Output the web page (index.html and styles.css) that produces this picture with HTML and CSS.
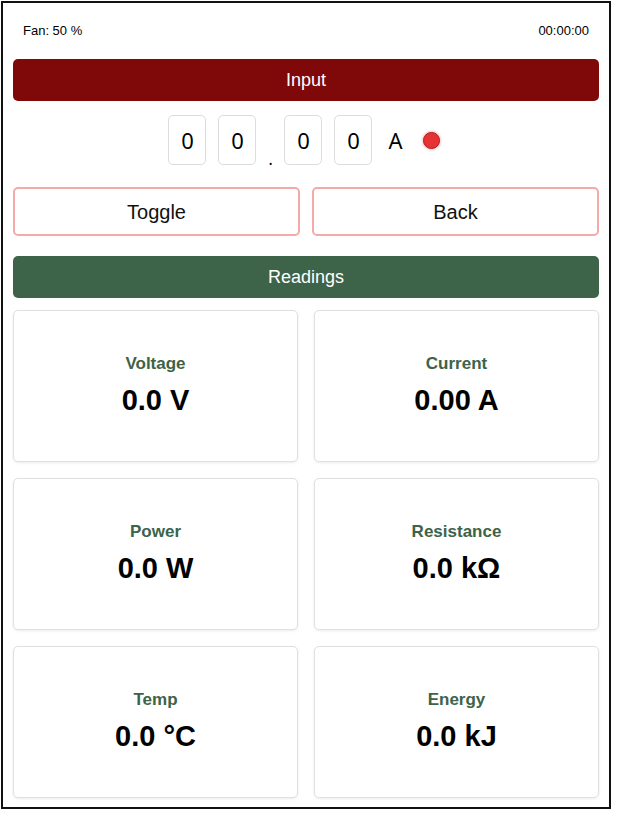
FILE: index.html
```html
<!DOCTYPE html>
<html>
<head>
<meta charset="utf-8">
<link rel="stylesheet" href="styles.css">
</head>
<body>
<div class="frame">
  <div class="status">
    <span>Fan: 50 %</span>
    <span>00:00:00</span>
  </div>
  <div class="bar bar-input">Input</div>
  <div class="digits">
    <div class="digit">0</div>
    <div class="digit">0</div>
    <div class="dot">.</div>
    <div class="digit">0</div>
    <div class="digit">0</div>
    <div class="unit">A</div>
    <div class="led"></div>
  </div>
  <div class="buttons">
    <button class="btn">Toggle</button>
    <button class="btn">Back</button>
  </div>
  <div class="bar bar-readings">Readings</div>
  <div class="cards">
    <div class="card"><div class="label">Voltage</div><div class="value">0.0 V</div></div>
    <div class="card"><div class="label">Current</div><div class="value">0.00 A</div></div>
    <div class="card"><div class="label">Power</div><div class="value">0.0 W</div></div>
    <div class="card"><div class="label">Resistance</div><div class="value">0.0 kΩ</div></div>
    <div class="card"><div class="label">Temp</div><div class="value">0.0 °C</div></div>
    <div class="card"><div class="label">Energy</div><div class="value">0.0 kJ</div></div>
  </div>
</div>
</body>
</html>
```

FILE: styles.css
```css
* { box-sizing: border-box; }
html, body { margin: 0; padding: 0; background: #fff; }
body { font-family: "Liberation Sans", Arial, sans-serif; color: #000; }
.frame {
  margin: 1px;
  width: 610px;
  height: 808px;
  border: 2px solid #111;
  padding: 18px 10px 0 10px;
}
.status {
  display: flex;
  justify-content: space-between;
  font-size: 13px;
  height: 20px;
  line-height: 20px;
  padding: 0 10px 0 10px;
}
.bar {
  height: 42px;
  border-radius: 5px;
  color: #fff;
  font-size: 18px;
  display: flex;
  align-items: center;
  justify-content: center;
}
.bar-input { background: #7f0909; margin-top: 18px; }
.bar-readings { background: #3d6349; margin-top: 20px; }
.digits {
  display: flex;
  justify-content: center;
  align-items: center;
  margin-top: 14px;
  height: 50px;
  font-family: "Noto Sans", "Liberation Sans", sans-serif;
  padding-right: 4px;
}
.digit {
  width: 38px;
  height: 50px;
  border: 1px solid #dcdcdc;
  border-radius: 5px;
  display: flex;
  align-items: center;
  justify-content: center;
  font-size: 22px;
  margin-right: 12px;
}
.dot {
  width: 18px;
  margin-left: -2px;
  align-self: flex-end;
  font-size: 16px;
  line-height: 16px;
  text-align: left;
  padding-left: 2px;
  margin-bottom: -2px;
}
.unit { font-size: 22px; margin-left: 4px; margin-right: 20px; }
.led {
  width: 17px;
  height: 17px;
  border-radius: 50%;
  background: #e53333;
  border: 1px solid #b01e1e;
  box-shadow: 0 0 3px rgba(229, 51, 51, 0.6);
}
.buttons {
  display: grid;
  grid-template-columns: 1fr 1fr;
  gap: 12px;
  margin-top: 22px;
}
.btn {
  height: 49px;
  background: #fff;
  border: 2px solid #f5aaaa;
  border-radius: 5px;
  font-family: "Liberation Sans", Arial, sans-serif;
  font-size: 20px;
  color: #111;
  padding-top: 2px;
}
.cards {
  display: grid;
  grid-template-columns: 285px 285px;
  justify-content: space-between;
  row-gap: 16px;
  margin-top: 12px;
}
.card {
  height: 152px;
  border: 1px solid #e0e0e0;
  border-radius: 5px;
  box-shadow: 0 1px 3px rgba(0, 0, 0, 0.08);
  display: flex;
  flex-direction: column;
  align-items: center;
  justify-content: center;
  gap: 10px;
  padding-bottom: 2px;
}
.label {
  color: #3d6349;
  font-weight: bold;
  font-size: 17px;
}
.value {
  font-weight: bold;
  font-size: 29px;
}
```
